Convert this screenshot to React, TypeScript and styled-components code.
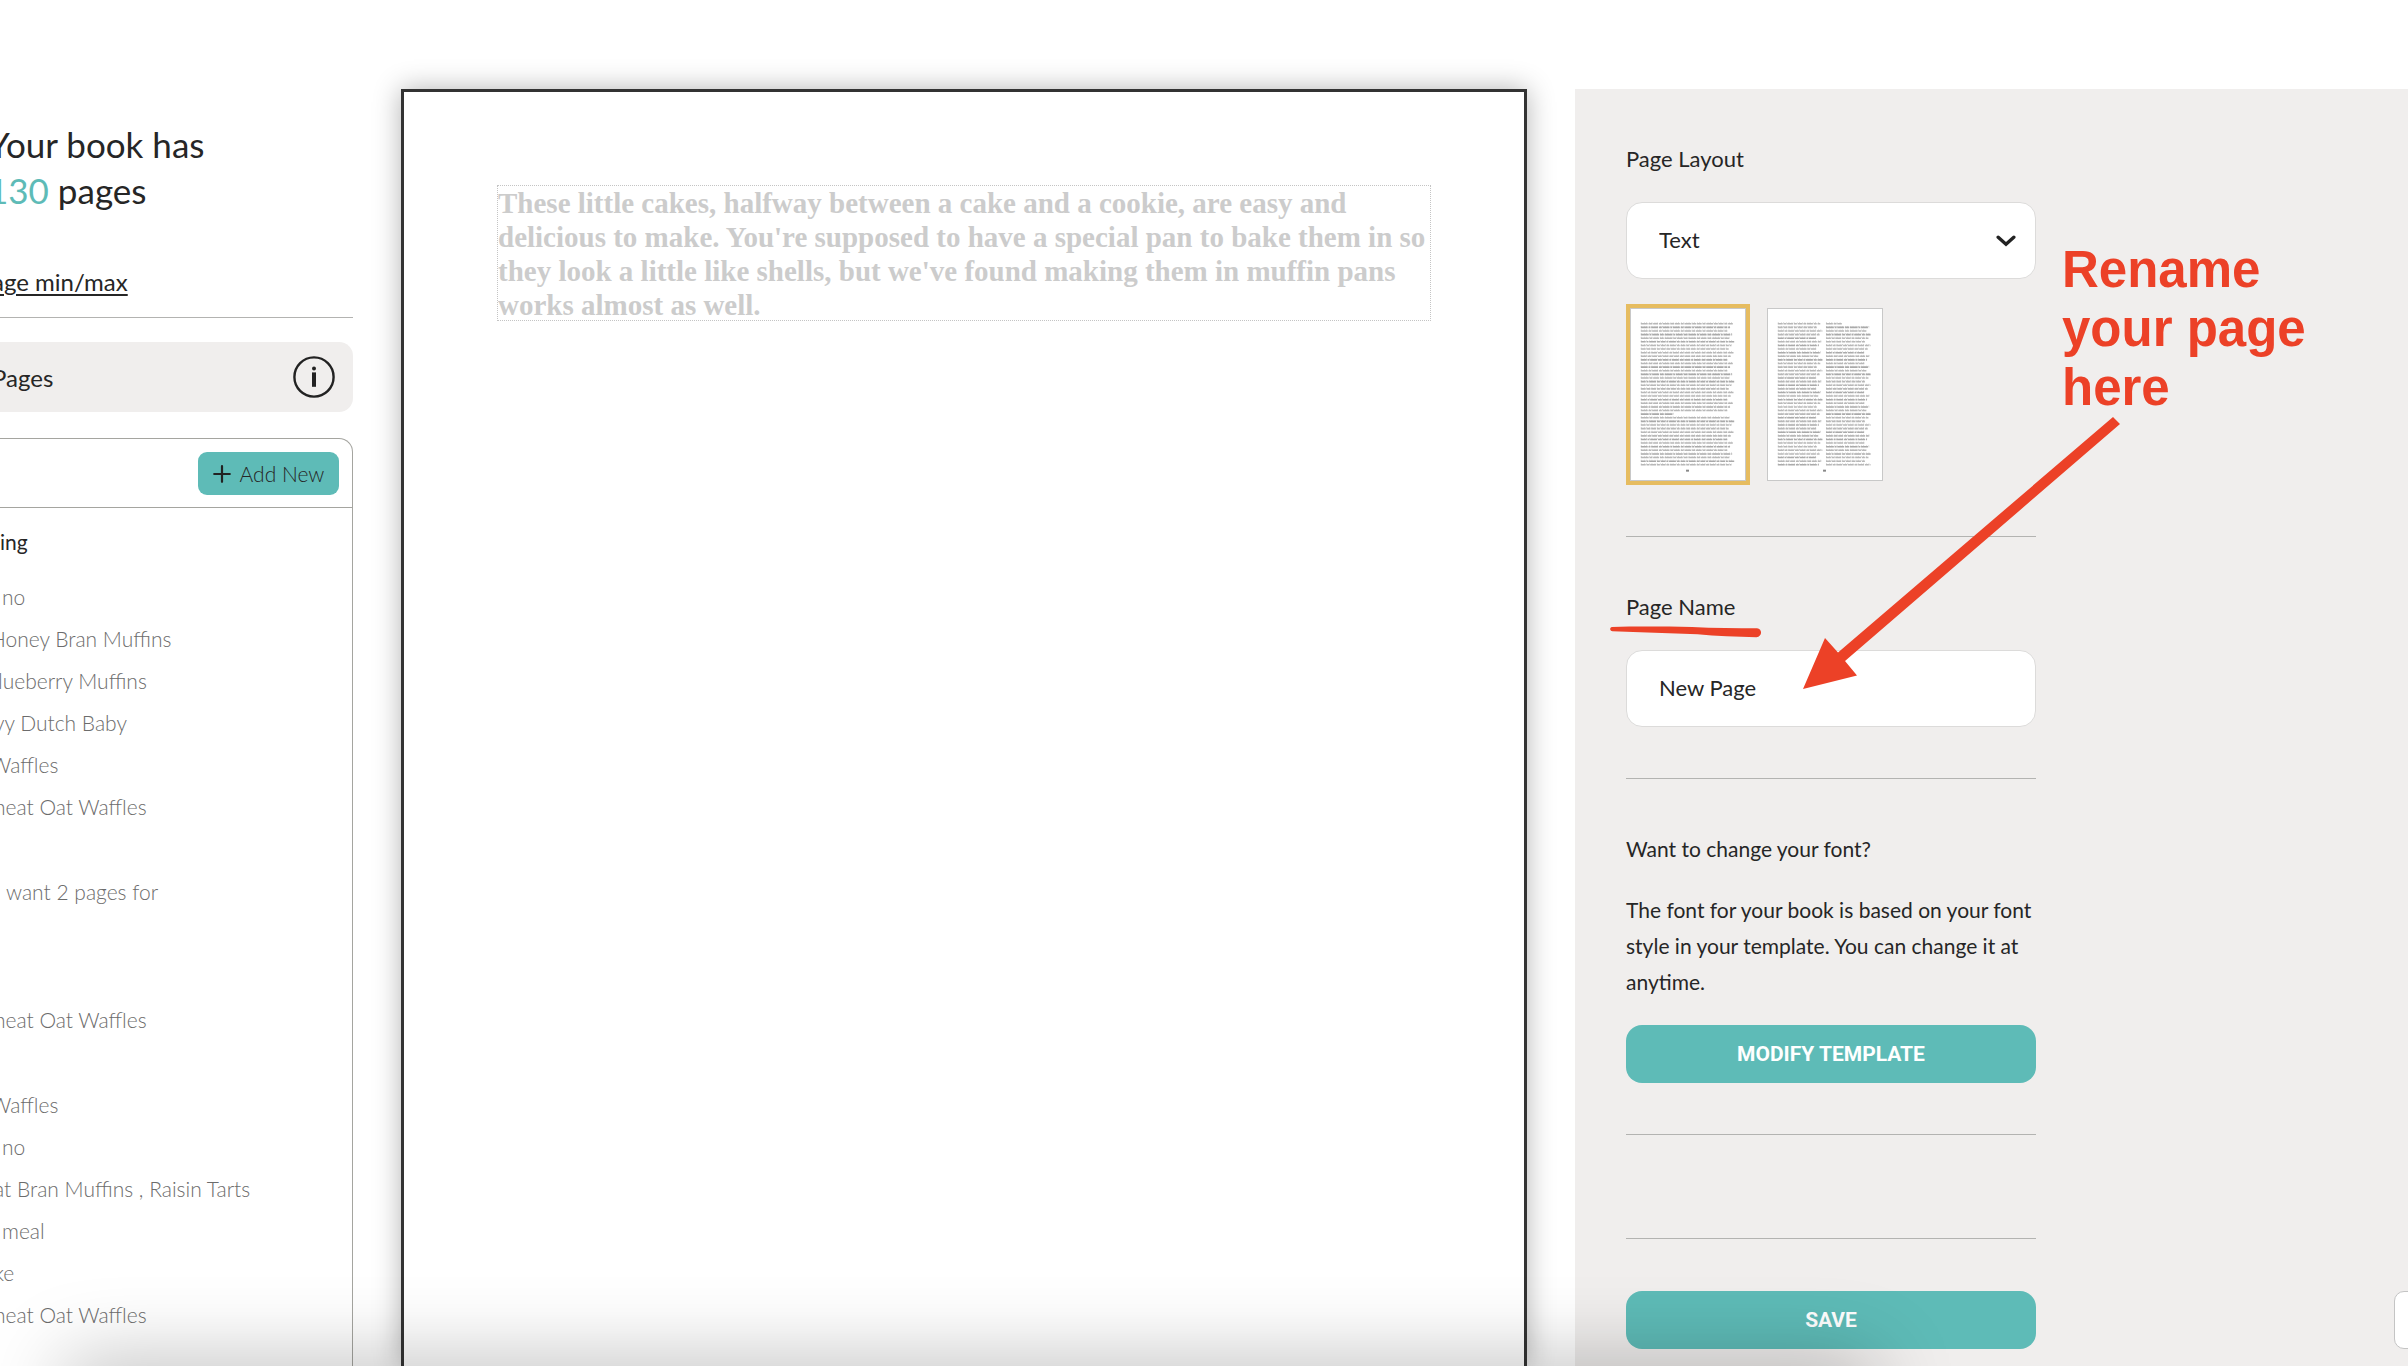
import React from "react";
import styled, { createGlobalStyle } from "styled-components";

const color = {
  ink: "#262626",
  muted: "#6c6c6c",
  line: "#b3b3b1",
  frame: "#a5a5a0",
  teal: "#5ebbb7",
  sand: "#f0eeed",
  gold: "#e6bc60",
  red: "#ec4127",
};

const GlobalStyle = createGlobalStyle`
  *, *::before, *::after { box-sizing: border-box; }
  body {
    margin: 0;
    background: #fff;
    color: ${color.ink};
    font-family: Lato, "Liberation Sans", sans-serif;
    font-size: 21px;
    overflow-x: hidden;
  }
  h1, h2, p, ul { margin: 0; padding: 0; font-weight: 400; }
  button, input, select, textarea { font: inherit; color: inherit; margin: 0; }
`;

const Editor = styled.div`
  position: relative;
  display: grid;
  grid-template-columns: 353px minmax(0, 1fr) 833px;
  column-gap: 48px;
  min-height: 100vh;
  padding-top: 89px;
  overflow: hidden;
`;

const Sidebar = styled.aside`
  display: flex;
  flex-direction: column;
  min-width: 0;
  white-space: nowrap;
`;

const Title = styled.h1`
  margin: 32px 0 0 -12px;
  font-size: 35px;
  line-height: 46px;
`;

const Count = styled.span`
  color: ${color.teal};
`;

const LimitLink = styled.a`
  display: block;
  margin-top: 54px;
  padding-bottom: 20px;
  border-bottom: 1px solid ${color.line};
  color: inherit;
  font-size: 24px;
  line-height: 30px;
  text-underline-offset: 3px;
`;

const PagesBar = styled.div`
  display: flex;
  align-items: center;
  justify-content: space-between;
  height: 70px;
  margin-top: 24px;
  padding-right: 18px;
  border-radius: 0 14px 14px 0;
  background: ${color.sand};
  font-size: 24px;
`;

const Bleed = styled.span`
  margin-left: -8px;
`;

const IconButton = styled.button`
  display: flex;
  padding: 0;
  border: 0;
  background: none;
`;

const PageList = styled.section`
  flex: 1;
  margin-top: 26px;
  border: 1px solid ${color.frame};
  border-width: 1px 1px 0 0;
  border-radius: 0 14px 0 0;
`;

const ListHeader = styled.div`
  display: flex;
  justify-content: flex-end;
  padding: 13px 13px 12px;
  border-bottom: 1px solid ${color.frame};
`;

const AddButton = styled.button`
  display: flex;
  align-items: center;
  justify-content: center;
  gap: 9px;
  width: 141px;
  height: 43px;
  padding: 0;
  border: 0;
  border-radius: 9px;
  background: ${color.teal};
`;

const AddText = styled.span`
  font-weight: 300;
`;

const Chapter = styled.h2`
  margin-top: 19px;
  font-size: 21px;
  line-height: 30px;
`;

const Rows = styled.ul`
  margin-top: 19px;
  list-style: none;
  color: ${color.muted};
  font-weight: 300;
`;

const Row = styled.li<{ $start: number }>`
  min-height: 43px;
  margin-left: ${(p) => p.$start}px;
  line-height: 42px;
  &:not(:empty) {
    min-height: 42px;
  }
`;

const Sheet = styled.main`
  padding: 93px;
  border: 3px solid #333;
  border-bottom: 0;
  background: #fff;
  box-shadow: 0 0 26px rgba(0, 0, 0, 0.3);
`;

const SheetText = styled.textarea`
  display: block;
  width: 100%;
  height: 136px;
  padding: 0;
  border: 1px dotted #c4c4c4;
  background: none;
  color: #ccc;
  font-family: "Liberation Serif", serif;
  font-size: 29px;
  font-weight: 700;
  line-height: 34px;
  white-space: pre;
  resize: none;
  overflow: hidden;
`;

const Panel = styled.aside`
  position: relative;
  padding: 0 51px 17px;
  background: ${color.sand};
`;

const Controls = styled.form`
  display: flex;
  flex-direction: column;
  width: 410px;
`;

const Block = styled.section`
  display: flex;
  flex-direction: column;
  gap: 25px;
  padding: 52px 0 51px;
  & + & {
    border-top: 1px solid ${color.line};
  }
  &:last-child {
    padding-bottom: 0;
  }
`;

const Label = styled.label`
  font-size: 22px;
  line-height: 36px;
`;

const Copy = styled.p`
  line-height: 36px;
`;

const field = `
  width: 100%;
  height: 77px;
  padding: 0 32px 2px;
  border: 1px solid #dcdbda;
  border-radius: 16px;
  background: #fff;
  font-size: 22px;
`;

const SelectWrap = styled.div`
  display: grid;
  align-items: center;
  > * { grid-area: 1 / 1; }
  > svg { justify-self: end; margin-right: 20px; pointer-events: none; }
`;

const Select = styled.select`
  ${field}
  appearance: none;
`;

const TextInput = styled.input`
  ${field}
`;

const Thumbs = styled.div`
  display: flex;
  align-items: center;
  gap: 13px;
`;

const Thumb = styled.button<{ $active?: boolean }>`
  display: flex;
  padding: 0;
  border: 4px solid ${(p) => (p.$active ? color.gold : "transparent")};
  background: none;
  svg {
    border: 1px solid #c8c8c8;
    background: #fff;
  }
`;

const ActionButton = styled.button`
  height: 58px;
  border: 0;
  border-radius: 16px;
  background: ${color.teal};
  color: #fff;
  font-family: Roboto, "Liberation Sans", sans-serif;
  font-size: 21px;
  font-weight: 700;
`;

const Help = styled.button`
  position: absolute;
  right: -40px;
  bottom: 17px;
  width: 54px;
  height: 58px;
  border: 1px solid #c4c4c4;
  border-radius: 10px;
  background: #fff;
`;

const Note = styled.p`
  position: absolute;
  top: 151px;
  left: 487px;
  width: 260px;
  color: ${color.red};
  font-family: "Liberation Sans", Arial, sans-serif;
  font-size: 51px;
  font-weight: 700;
  line-height: 59px;
`;

const Markup = styled.svg`
  position: absolute;
  top: 0;
  left: 0;
  pointer-events: none;
`;

const DockShadow = styled.div`
  position: absolute;
  top: 100%;
  left: 70px;
  right: 540px;
  height: 60px;
  box-shadow: 0 0 80px 6px rgba(0, 0, 0, 0.26);
  pointer-events: none;
`;

const rows: [string, number][] = [
  ["no", 2],
  ["Honey Bran Muffins", -10],
  ["lueberry Muffins", -2],
  ["vy Dutch Baby", -6],
  ["Waffles", -10],
  ["heat Oat Waffles", -6],
  ["", 0],
  ["want 2 pages for", 6],
  ["", 0],
  ["", 0],
  ["heat Oat Waffles", -6],
  ["", 0],
  ["Waffles", -10],
  ["no", 2],
  ["at Bran Muffins , Raisin Tarts", -6],
  ["meal", 2],
  ["ke", -6],
  ["heat Oat Waffles", -6],
];

function TextColumn({ x, width, seed, breaks }: { x: number; width: number; seed: number; breaks: number[] }) {
  const lines = Array.from({ length: 40 }, (_, i) => {
    const n = (i * 37 + seed * 13) % 11;
    const w = breaks.includes(i) ? width * 0.35 : width - n * 0.7;
    const dash = `${5 + (n % 4)} 0.8 ${2 + (n % 3)} 0.7 ${7 - (n % 3)} 0.9 ${3 + (n % 2)} 0.8`;
    return { y: 14.5 + i * 3.68, w, dash, dark: n % 3 === 0 };
  });
  return (
    <>
      {lines.map((l) => (
        <g key={l.y} fill="none">
          <line x1={x} x2={x + l.w} y1={l.y} y2={l.y} stroke={l.dark ? "#aaa" : "#b8b8b8"} strokeWidth="1.6" strokeDasharray={l.dash} />
          <line x1={x} x2={x + l.w} y1={l.y - 0.9} y2={l.y - 0.9} stroke="#bbb" strokeWidth="0.8" strokeDasharray="1 2.2 0.8 1.4" />
        </g>
      ))}
    </>
  );
}

function LayoutThumb({ columns }: { columns: 1 | 2 }) {
  return (
    <svg width="116" height="173" viewBox="0 0 116 173" aria-hidden="true">
      {columns === 1 ? (
        <TextColumn x={10} width={95} seed={1} breaks={[25]} />
      ) : (
        <>
          <TextColumn x={10} width={46} seed={2} breaks={[]} />
          <TextColumn x={59} width={46} seed={5} breaks={[0]} />
        </>
      )}
      <rect x="56" y="163" width="3" height="2" fill="#888" />
    </svg>
  );
}

export default function App() {
  return (
    <>
      <GlobalStyle />
      <Editor>
        <Sidebar>
          <Title>
            Your book has
            <br />
            <Count>130</Count> pages
          </Title>
          <LimitLink href="#limits"><Bleed>age min/max</Bleed></LimitLink>
          <PagesBar>
            <Bleed>Pages</Bleed>
            <IconButton type="button" aria-label="About pages">
              <svg width="42" height="42" viewBox="0 0 42 42" fill="none">
                <circle cx="21" cy="21" r="19.6" stroke="#222" strokeWidth="2.4" />
                <circle cx="21" cy="12.6" r="2" fill="#222" />
                <rect x="19" y="16.4" width="4" height="14.4" fill="#222" />
              </svg>
            </IconButton>
          </PagesBar>
          <PageList>
            <ListHeader>
              <AddButton type="button">
                <svg width="18" height="18" viewBox="0 0 18 18" stroke="#222" strokeWidth="2.2" strokeLinecap="round" aria-hidden="true">
                  <path d="M9 1.2v15.6M1.2 9h15.6" />
                </svg>
                <AddText>Add New</AddText>
              </AddButton>
            </ListHeader>
            <Chapter>ing</Chapter>
            <Rows>
              {rows.map(([name, start], i) => (
                <Row key={i} $start={start}>{name}</Row>
              ))}
            </Rows>
          </PageList>
        </Sidebar>

        <Sheet>
          <SheetText
            aria-label="Page text"
            spellCheck={false}
            defaultValue={
              "These little cakes, halfway between a cake and a cookie, are easy and\n" +
              "delicious to make. You're supposed to have a special pan to bake them in so\n" +
              "they look a little like shells, but we've found making them in muffin pans\n" +
              "works almost as well."
            }
          />
        </Sheet>

        <Panel>
          <Controls onSubmit={(e) => e.preventDefault()}>
            <Block>
              <Label htmlFor="layout">Page Layout</Label>
              <SelectWrap>
                <Select id="layout" defaultValue="Text">
                  <option>Text</option>
                </Select>
                <svg width="20" height="12" viewBox="0 0 20 12" fill="none" stroke="#222" strokeWidth="3.4" strokeLinecap="round" aria-hidden="true">
                  <path d="M2.2 2.2 10 9.2l7.8-7" />
                </svg>
              </SelectWrap>
              <Thumbs>
                <Thumb type="button" $active aria-label="One column"><LayoutThumb columns={1} /></Thumb>
                <Thumb type="button" aria-label="Two columns"><LayoutThumb columns={2} /></Thumb>
              </Thumbs>
            </Block>
            <Block>
              <Label htmlFor="name">Page Name</Label>
              <TextInput id="name" defaultValue="New Page" />
            </Block>
            <Block>
              <Copy>Want to change your font?</Copy>
              <Copy>
                The font for your book is based on your font style in your
                template. You can change it at anytime.
              </Copy>
              <ActionButton type="button">MODIFY TEMPLATE</ActionButton>
            </Block>
            <Block />
            <Block>
              <ActionButton type="submit">SAVE</ActionButton>
            </Block>
          </Controls>
          <Help type="button" aria-label="Help" />
          <Note>Rename your page here</Note>
          <Markup width="833" height="700" viewBox="1575 89 833 700" fill={color.red} aria-hidden="true">
            <path d="M2113 417l7 7L1845 661l12 14.5L1803 689l22-51 13 14.5z" />
            <path d="M1612 627c25-.6 52-.4 80 0 22 1.200 44 1 65 1.300 5.500.5 5.500 8.400-.5 8.900-20-.5-40-1.200-59-3-28-1-58-2-85-3-3-.4-3-3.800-.5-4.200z" />
          </Markup>
        </Panel>
        <DockShadow />
      </Editor>
    </>
  );
}
